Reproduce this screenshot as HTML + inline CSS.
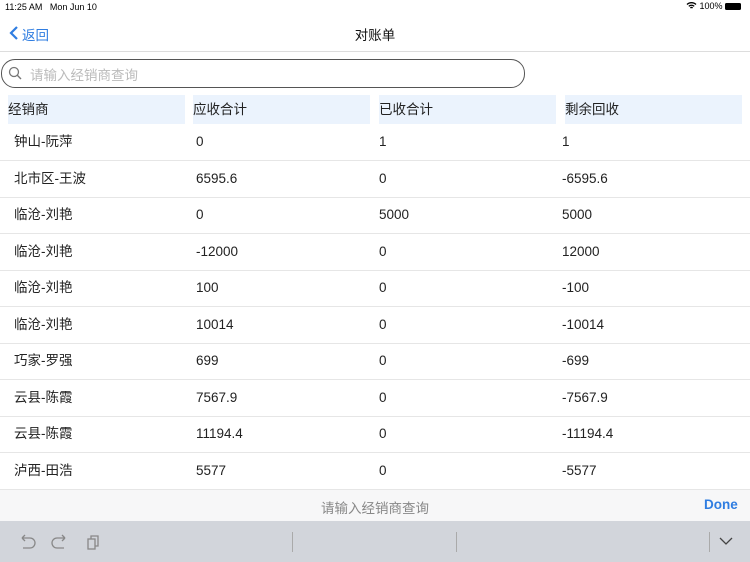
<html><head><style>
body{margin:0;width:750px;height:562px;overflow:hidden;background:#fff;font-family:"Liberation Sans","Noto Sans CJK SC",sans-serif;position:relative}
.a{position:absolute}
.row{position:absolute;left:0;width:750px;height:36px;border-bottom:1px solid #e6e6e6;font-size:13.5px;color:#222}
.row span{position:absolute;top:0;height:36px;line-height:36px}
.h{position:absolute;top:95px;height:29px;background:#ebf3fd;font-size:13.5px;color:#222;line-height:29px;width:177px}
</style></head><body>
<div class="a" style="left:5px;top:2px;font-size:9px;color:#000">11:25 AM&nbsp;&nbsp; Mon Jun 10</div>
<div class="a" style="left:686px;top:1px;font-size:9px;color:#000">
<svg width="11" height="9" viewBox="0 0 11 9" style="vertical-align:-1px"><path d="M1 3.5A6.5 6.5 0 0 1 10 3.5M2.8 5.3A4 4 0 0 1 8.2 5.3M4.4 7A1.6 1.6 0 0 1 6.6 7" stroke="#000" stroke-width="1.3" fill="none"/></svg> 100% <span style="display:inline-block;width:16px;height:7px;background:#000;border-radius:1.5px;vertical-align:-1px"></span></div>
<svg class="a" style="left:9px;top:25px" width="10" height="16" viewBox="0 0 10 16"><path d="M8 2L2 8L8 14" stroke="#2f7de1" stroke-width="2.2" fill="none"/></svg>
<div class="a" style="left:22px;top:24px;font-size:13.5px;color:#2f7de1">返回</div>
<div class="a" style="left:0;width:750px;top:24px;text-align:center;font-size:13.5px;color:#111">对账单</div>
<div class="a" style="left:0;top:51px;width:750px;height:1px;background:#ddd"></div>
<div class="a" style="left:1px;top:59px;width:522px;height:27px;border:1px solid #555;border-radius:14px"></div>
<svg class="a" style="left:8px;top:66px" width="14" height="14" viewBox="0 0 14 14"><circle cx="6" cy="6" r="4.5" stroke="#777" stroke-width="1.3" fill="none"/><path d="M9.3 9.3L13 13" stroke="#777" stroke-width="1.4"/></svg>
<div class="a" style="left:30px;top:64px;font-size:13.5px;color:#bbb">请输入经销商查询</div>
<div class="h" style="left:8px">经销商</div><div class="h" style="left:193px">应收合计</div><div class="h" style="left:379px">已收合计</div><div class="h" style="left:565px">剩余回收</div>
<div class="row" style="top:124px"><span style="left:14px">钟山-阮萍</span><span style="left:196px">0</span><span style="left:379px">1</span><span style="left:562px">1</span></div>
<div class="row" style="top:161px"><span style="left:14px">北市区-王波</span><span style="left:196px">6595.6</span><span style="left:379px">0</span><span style="left:562px">-6595.6</span></div>
<div class="row" style="top:197px"><span style="left:14px">临沧-刘艳</span><span style="left:196px">0</span><span style="left:379px">5000</span><span style="left:562px">5000</span></div>
<div class="row" style="top:234px"><span style="left:14px">临沧-刘艳</span><span style="left:196px">-12000</span><span style="left:379px">0</span><span style="left:562px">12000</span></div>
<div class="row" style="top:270px"><span style="left:14px">临沧-刘艳</span><span style="left:196px">100</span><span style="left:379px">0</span><span style="left:562px">-100</span></div>
<div class="row" style="top:307px"><span style="left:14px">临沧-刘艳</span><span style="left:196px">10014</span><span style="left:379px">0</span><span style="left:562px">-10014</span></div>
<div class="row" style="top:343px"><span style="left:14px">巧家-罗强</span><span style="left:196px">699</span><span style="left:379px">0</span><span style="left:562px">-699</span></div>
<div class="row" style="top:380px"><span style="left:14px">云县-陈霞</span><span style="left:196px">7567.9</span><span style="left:379px">0</span><span style="left:562px">-7567.9</span></div>
<div class="row" style="top:416px"><span style="left:14px">云县-陈霞</span><span style="left:196px">11194.4</span><span style="left:379px">0</span><span style="left:562px">-11194.4</span></div>
<div class="row" style="top:453px"><span style="left:14px">泸西-田浩</span><span style="left:196px">5577</span><span style="left:379px">0</span><span style="left:562px">-5577</span></div>
<div class="a" style="left:0;top:490px;width:750px;height:31px;background:#f7f7f8"></div>
<div class="a" style="left:0;width:750px;top:497px;text-align:center;font-size:13.5px;color:#888">请输入经销商查询</div>
<div class="a" style="left:704px;top:497px;font-size:13.5px;font-weight:bold;color:#2f7de1">Done</div>
<div class="a" style="left:0;top:521px;width:750px;height:41px;background:#d2d5db"></div>
<svg class="a" style="left:17px;top:533px" width="90" height="18" viewBox="0 0 90 18"><path d="M5 5H13A5 5 0 0 1 13 15H6M5 5L8 2M5 5L8 8" stroke="#888" stroke-width="1.3" fill="none"/><path d="M48 5H40A5 5 0 0 0 40 15H47M48 5L45 2M48 5L45 8" stroke="#888" stroke-width="1.3" fill="none"/><rect x="71" y="6" width="7" height="10" stroke="#888" stroke-width="1.3" fill="none"/><path d="M74 6V3H81V13H78" stroke="#888" stroke-width="1.3" fill="none"/></svg>
<div class="a" style="left:292px;top:532px;width:1px;height:20px;background:#aaa"></div>
<div class="a" style="left:456px;top:532px;width:1px;height:20px;background:#aaa"></div>
<div class="a" style="left:709px;top:532px;width:1px;height:20px;background:#aaa"></div>
<svg class="a" style="left:719px;top:537px" width="14" height="9" viewBox="0 0 14 9"><path d="M1 1L7 7L13 1" stroke="#444" stroke-width="1.3" fill="none"/></svg>
</body></html>
